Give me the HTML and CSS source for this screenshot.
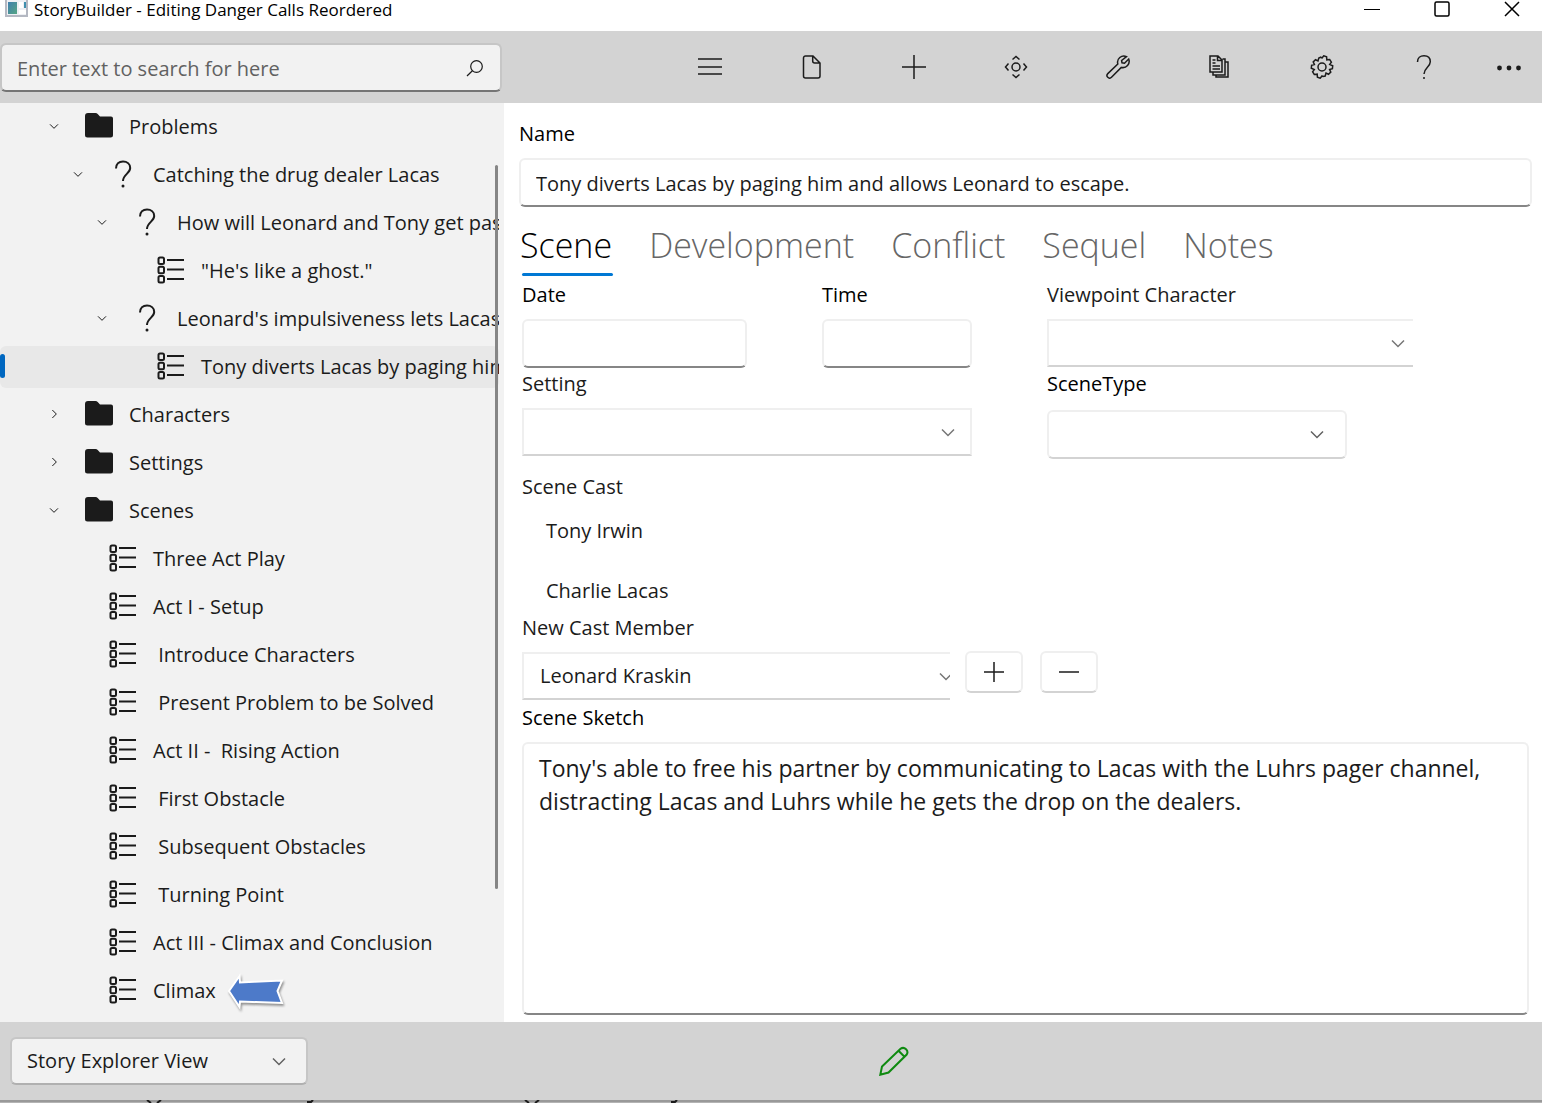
FILE: index.html
```html
<!DOCTYPE html>
<html lang="en">
<head>
<meta charset="utf-8">
<title>StoryBuilder - Editing Danger Calls Reordered</title>
<link rel="stylesheet" href="styles.css">
</head>
<body>
<svg class="sprite" aria-hidden="true">
  <symbol id="i-down" viewBox="0 0 24 24"><path d="M6 9.500l6 6 6-6"/></symbol>
  <symbol id="i-right" viewBox="0 0 24 24"><path d="M9.500 6l6 6-6 6"/></symbol>
  <symbol id="i-folder" viewBox="0 0 28 26"><path d="M0 3a3 3 0 0 1 3-3h7.500a3 3 0 0 1 2.200 1l2.300 2.500H26a2 2 0 0 1 2 2V22a2.500 2.500 0 0 1-2.500 2.500h-23A2.500 2.500 0 0 1 0 22z"/></symbol>
  <symbol id="i-question" viewBox="0 0 28 28"><path d="M7 8.500c0-4.500 3-7 7-7s7.200 2.500 7.200 6.500c0 5.500-7.200 6.500-7.200 13"/><circle cx="14" cy="26" r="1.500" fill="#1b1b1b" stroke="none"/></symbol>
  <symbol id="i-list" viewBox="0 0 28 28"><rect x="1.500" y="1.500" width="5.500" height="6.500" rx="1.500"/><rect x="1.500" y="10.800" width="5.500" height="6.500" rx="1.500"/><rect x="1.500" y="20" width="5.500" height="6.500" rx="1.500"/><path d="M10 4h17M10 13.500h17M10 23h17"/></symbol>
</svg>

<header class="titlebar">
  <svg class="app-icon" viewBox="0 0 24 18"><defs><linearGradient id="g" x1="0" y1="0" x2="1" y2="1"><stop offset="0" stop-color="#3f7fae"/><stop offset="1" stop-color="#55a584"/></linearGradient></defs><rect x="1" y="-4" width="21" height="20" fill="#eef0f4" stroke="#b4b8c2" stroke-width="2"/><rect x="3" y="2" width="9" height="12" fill="url(#g)"/><rect x="14" y="2" width="4" height="6" fill="#fff"/><rect x="19" y="2" width="2" height="6" fill="#3f8fae"/><rect x="14" y="10" width="7" height="4" fill="#fff"/></svg>
  <h1>StoryBuilder - Editing Danger Calls Reordered</h1>
  <div class="window-controls">
    <button aria-label="Minimize"><svg viewBox="0 0 16 16"><path d="M0 8.500h16" stroke-width="1"/></svg></button>
    <button aria-label="Maximize"><svg viewBox="0 0 16 16"><rect x="1" y="1" width="14" height="14" rx="1.500"/></svg></button>
    <button aria-label="Close"><svg viewBox="0 0 16 16"><path d="M1 1l14 14M15 1L1 15"/></svg></button>
  </div>
</header>

<div class="toolbar">
  <form class="search" role="search">
    <input type="text" aria-label="Search" placeholder="Enter text to search for here">
    <button type="button" aria-label="Search"><svg viewBox="0 0 18 18"><circle cx="10.500" cy="7.500" r="5.800"/><path d="M6.400 11.700L1 17"/></svg></button>
  </form>
  <nav class="commands" aria-label="Commands">
    <button aria-label="Menu"><svg viewBox="0 0 24 24"><path d="M0 4h24M0 12h24M0 19h24"/></svg></button>
    <button aria-label="File"><svg viewBox="0 0 24 24"><path d="M5.500 1h7.500l7 7v13a2 2 0 0 1-2 2H5.500a2 2 0 0 1-2-2V3a2 2 0 0 1 2-2zM12.700 1v5a2 2 0 0 0 2 2H20"/></svg></button>
    <button aria-label="Add"><svg viewBox="0 0 24 24"><path d="M0 12h24M12 0v24"/></svg></button>
    <button aria-label="Move"><svg viewBox="0 0 24 24"><circle cx="12" cy="12" r="4"/><path d="M8.500 4.500L12 1.500l3.500 3M8.500 19.500l3.500 3 3.500-3M4.500 8.500L1.500 12l3 3.500M19.500 8.500l3 3.500-3 3.500"/></svg></button>
    <button aria-label="Tools"><svg viewBox="0 0 24 24"><path d="M20.500 1.600A6.300 6.300 0 0 0 11.800 9L1.800 18.600a2.600 2.600 0 0 0 3.700 3.700L15.300 12.400A6.300 6.300 0 0 0 22.700 4l-4.200 4.200-2.500-.4-.4-2.300z"/></svg></button>
    <button aria-label="Reports"><svg viewBox="0 0 24 24"><path d="M2 1h8l4 4v12H2zM9.500 1v4.500H14M4.500 5h3M4.500 8h3M4.500 11h7.500M4.500 14h7.500M14.500 4H17v16H5v-3M17.500 7H20v15H8v-2"/></svg></button>
    <button aria-label="Settings"><svg viewBox="0 0 24 24"><circle cx="12" cy="12" r="4"/><path d="M12 3l1.800-2.200 2.800 1 .2 3 2.900-.3 1.700 2.600-1.700 2.300 3 1.300-.3 3-2.800.8 1.200 2.600-2.300 2.200-2.500-1.200-.8 2.900-2.200.4L12 21l-1.800 2.200-2.800-1-.2-3-2.900.3-1.700-2.600 1.700-2.300-3-1.300.3-3 2.800-.8L3.200 6.900l2.300-2.200L8 5.900 8.800 3l2-.8z"/></svg></button>
    <button aria-label="Help"><svg viewBox="0 0 24 24"><path d="M5.500 7c0-4 2.800-6.200 6.500-6.200S18.300 3 18.300 6.800c0 5-6.300 6-6.300 12.200"/><circle class="solid" cx="12" cy="23" r="1"/></svg></button>
    <button class="more" aria-label="More"><svg viewBox="0 0 24 24"><g class="solid"><circle cx="2.500" cy="13" r="2.400"/><circle cx="12" cy="13" r="2.400"/><circle cx="21.500" cy="13" r="2.400"/></g></svg></button>
  </nav>
</div>

<main>
  <aside class="explorer">
    <ul class="tree">
      <li class="l1"><svg class="chev"><use href="#i-down"/></svg><svg class="icon solid"><use href="#i-folder"/></svg><span>Problems</span></li>
      <li class="l2"><svg class="chev"><use href="#i-down"/></svg><svg class="icon"><use href="#i-question"/></svg><span>Catching the drug dealer Lacas</span></li>
      <li class="l3"><svg class="chev"><use href="#i-down"/></svg><svg class="icon"><use href="#i-question"/></svg><span>How will Leonard and Tony get past</span></li>
      <li class="l4"><svg class="chev"></svg><svg class="icon"><use href="#i-list"/></svg><span>"He's like a ghost."</span></li>
      <li class="l3"><svg class="chev"><use href="#i-down"/></svg><svg class="icon"><use href="#i-question"/></svg><span>Leonard's impulsiveness lets Lacas</span></li>
      <li class="l4 selected"><svg class="chev"></svg><svg class="icon"><use href="#i-list"/></svg><span>Tony diverts Lacas by paging him</span></li>
      <li class="l1"><svg class="chev"><use href="#i-right"/></svg><svg class="icon solid"><use href="#i-folder"/></svg><span>Characters</span></li>
      <li class="l1"><svg class="chev"><use href="#i-right"/></svg><svg class="icon solid"><use href="#i-folder"/></svg><span>Settings</span></li>
      <li class="l1"><svg class="chev"><use href="#i-down"/></svg><svg class="icon solid"><use href="#i-folder"/></svg><span>Scenes</span></li>
      <li class="l2"><svg class="chev"></svg><svg class="icon"><use href="#i-list"/></svg><span>Three Act Play</span></li>
      <li class="l2"><svg class="chev"></svg><svg class="icon"><use href="#i-list"/></svg><span>Act I - Setup</span></li>
      <li class="l2"><svg class="chev"></svg><svg class="icon"><use href="#i-list"/></svg><span> Introduce Characters</span></li>
      <li class="l2"><svg class="chev"></svg><svg class="icon"><use href="#i-list"/></svg><span> Present Problem to be Solved</span></li>
      <li class="l2"><svg class="chev"></svg><svg class="icon"><use href="#i-list"/></svg><span>Act II -  Rising Action</span></li>
      <li class="l2"><svg class="chev"></svg><svg class="icon"><use href="#i-list"/></svg><span> First Obstacle</span></li>
      <li class="l2"><svg class="chev"></svg><svg class="icon"><use href="#i-list"/></svg><span> Subsequent Obstacles</span></li>
      <li class="l2"><svg class="chev"></svg><svg class="icon"><use href="#i-list"/></svg><span> Turning Point</span></li>
      <li class="l2"><svg class="chev"></svg><svg class="icon"><use href="#i-list"/></svg><span>Act III - Climax and Conclusion</span></li>
      <li class="l2"><svg class="chev"></svg><svg class="icon"><use href="#i-list"/></svg><span>Climax</span>
        <svg class="pointer" viewBox="0 0 60 40"><path d="M4 18L14.500 3l.5 6.500L57 7.500 52.500 18 57 30l-42-1.500-.5 5.500z"/></svg></li>
    </ul>
    <div class="scroll-thumb"></div>
  </aside>

  <form class="editor">
    <label for="name">Name</label>
    <input id="name" type="text" value="Tony diverts Lacas by paging him and allows Leonard to escape.">
    <div class="tabs" role="tablist">
      <button type="button" role="tab" aria-selected="true">Scene</button>
      <button type="button" role="tab">Development</button>
      <button type="button" role="tab">Conflict</button>
      <button type="button" role="tab">Sequel</button>
      <button type="button" role="tab">Notes</button>
    </div>
    <div class="panel">
      <div class="fields">
        <div class="column">
          <div class="when">
            <div class="field"><label for="date">Date</label><input id="date" type="text"></div>
            <div class="field"><label for="time">Time</label><input id="time" type="text"></div>
          </div>
          <label class="soft" for="setting">Setting</label>
          <div class="combo square"><select id="setting"><option></option></select><svg><use href="#i-down"/></svg></div>
        </div>
        <div class="column">
          <label class="soft" for="viewpoint">Viewpoint Character</label>
          <div class="combo square clipped viewpoint"><select id="viewpoint"><option></option></select><svg><use href="#i-down"/></svg></div>
          <label for="scenetype">SceneType</label>
          <div class="combo scenetype"><select id="scenetype"><option></option></select><svg><use href="#i-down"/></svg></div>
        </div>
      </div>
      <h2>Scene Cast</h2>
      <ul class="cast"><li>Tony Irwin</li><li>Charlie Lacas</li></ul>
      <label class="soft" for="member">New Cast Member</label>
      <div class="member-row">
        <div class="combo square clipped member"><select id="member"><option>Leonard Kraskin</option></select><svg><use href="#i-down"/></svg></div>
        <button type="button" aria-label="Add cast member"><svg viewBox="0 0 22 22"><path d="M1 11h20M11 1v20"/></svg></button>
        <button type="button" aria-label="Remove cast member"><svg viewBox="0 0 22 22"><path d="M1 11h20"/></svg></button>
      </div>
      <label for="sketch">Scene Sketch</label>
      <textarea id="sketch">Tony's able to free his partner by communicating to Lacas with the Luhrs pager channel, distracting Lacas and Luhrs while he gets the drop on the dealers.</textarea>
    </div>
  </form>
</main>

<footer>
  <div class="combo view"><select aria-label="View"><option>Story Explorer View</option></select><svg><use href="#i-down"/></svg></div>
  <svg class="pencil" viewBox="0 0 30 30"><path d="M1.300 28.700L3 20.500 21.500 2.800a4.300 4.300 0 0 1 6 6L9.500 26.500zM19.500 4.700l6 6"/></svg>
</footer>
<div class="window-edge">
  <svg viewBox="0 0 700 3"><path d="M147 0l4 3M161 0l-4 3M307 2h4l2-2M525 0l4 3M539 0l-4 3M671 2h4l2-2"/></svg>
</div>
</body>
</html>
```

FILE: styles.css
```css
* { box-sizing: border-box; }

body {
  margin: 0;
  min-height: 100vh;
  display: flex;
  flex-direction: column;
  font: 20px/32px "Open Sans", "Noto Sans", sans-serif;
  color: #000;
  background: #fff;
}

button, input, select, textarea { font: inherit; color: #1b1b1b; margin: 0; }
button { padding: 0; border: 0; background: none; display: flex; align-items: center; justify-content: center; }
ul { list-style: none; margin: 0; padding: 0; }
h1, h2 { margin: 0; font-size: inherit; font-weight: 400; }
svg { fill: none; stroke: #1b1b1b; stroke-width: 1.5; flex: none; }
.sprite { position: absolute; width: 0; height: 0; }
.solid { fill: #1b1b1b; stroke: none; }

.titlebar { height: 31px; display: flex; align-items: flex-start; padding: 0 22px 0 5px; }
.app-icon { width: 24px; height: 18px; stroke: none; }
.titlebar h1 { font-size: 17px; line-height: 20px; margin-left: 5px; }
.window-controls { display: flex; gap: 54px; margin-left: auto; }
.window-controls button { height: 17px; }
.window-controls svg { width: 16px; height: 16px; stroke: #000; }

.toolbar { height: 72px; background: #d3d3d3; display: flex; align-items: center; }
.search {
  width: 502px;
  height: 49px;
  display: flex;
  background: #f2f2f2;
  border: 2px solid #c6c6c6;
  border-bottom-color: #757575;
  border-radius: 6px;
  background-clip: padding-box;
}
.search input { flex: 1; min-width: 0; border: 0; background: none; padding: 3px 15px 0; }
.search input::placeholder { color: #616161; opacity: 1; }
.search button { width: 50px; padding-top: 2px; }
.search svg { width: 18px; height: 18px; stroke-width: 1.2; }
.commands { display: flex; margin-left: auto; align-self: stretch; }
.commands button { width: 102px; }
.commands .more { width: 67px; }
.commands svg { width: 24px; height: 24px; }

main { flex: 1; display: flex; }
.explorer { width: 504px; background: #f2f2f2; position: relative; padding-bottom: 4px; }
.tree { width: 499px; overflow: hidden; color: #1b1b1b; }
.tree li { position: relative; height: 42px; margin: 3px 0 6px; display: flex; align-items: center; white-space: pre; border-radius: 6px; }
.tree .l1 { padding-left: 42px; }
.tree .l2 { padding-left: 66px; }
.tree .l3 { padding-left: 90px; }
.tree .l4 { padding-left: 114px; }
.tree .selected { background: #e8e8e8; }
.selected::before { content: ""; position: absolute; left: 0; top: 8px; width: 5px; height: 24px; border-radius: 3px; background: #0067c0; }
.chev { width: 24px; height: 24px; margin: 0 19px 2px 0; padding: 4px; }
.icon { width: 28px; height: 28px; margin: 0 16px 2px 0; stroke-width: 2; }
.tree .solid { stroke: none; }
.pointer { position: absolute; left: 225px; top: 3px; width: 60px; height: 40px; fill: #4d7ac9; stroke: #fff; stroke-width: 2; filter: drop-shadow(1px 2px 1px #0006); }
.scroll-thumb { position: absolute; left: 495px; top: 62px; width: 3px; height: 724px; border-radius: 2px; background: #868686; }

.editor { flex: 1; min-width: 0; display: flex; flex-direction: column; padding: 15px 10px 7px 15px; }
label, h2 { display: block; margin-bottom: 8px; }
.soft, h2, .cast { color: #1b1b1b; }
.editor input, textarea {
  display: block;
  width: 100%;
  height: 49px;
  padding: 2px 15px 0;
  border: 2px solid #efefef;
  border-bottom-color: #868686;
  border-radius: 6px;
  background: #fff;
}
.tabs { display: flex; gap: 37px; height: 69px; padding-left: 1px; }
.tabs button { font-size: 34px; font-weight: 300; line-height: 62px; padding-top: 7px; color: #666; position: relative; align-items: flex-start; }
.tabs [aria-selected] { color: #000; }
.tabs [aria-selected]::after { content: ""; position: absolute; left: 2px; right: -1px; bottom: 0; height: 3px; border-radius: 2px; background: #0078d4; }
.panel { flex: 1; display: flex; flex-direction: column; padding: 3px 3px 0; }
.fields { display: grid; grid-template-columns: 450px 1fr; column-gap: 75px; margin-bottom: 12px; }
.when { display: grid; grid-template-columns: 3fr 2fr; column-gap: 75px; }

.combo { position: relative; height: 48px; }
.combo select {
  display: block;
  width: 100%;
  height: 100%;
  padding: 0 16px;
  appearance: none;
  border: 2px solid #efefef;
  border-bottom-color: #d3d3d3;
  border-radius: 6px;
  background: #fff;
}
.combo.square select { border-radius: 0; }
.combo.clipped select { border-right: 0; }
.combo svg { position: absolute; right: 12px; top: 12px; width: 24px; height: 24px; pointer-events: none; stroke: #616161; }
.combo.square svg { stroke: #767676; }
.viewpoint { width: 366px; margin-bottom: 1px; }
.combo.viewpoint svg { right: 3px; }
.scenetype { width: 300px; height: 49px; margin-top: 10px; }
.combo.scenetype svg { right: 18px; }
.cast { padding: 4px 24px 5px; display: grid; row-gap: 28px; }
.member-row { display: flex; gap: 15px; margin-bottom: 2px; }
.member { width: 428px; overflow: hidden; }
.combo.member svg { right: -8px; }
.member-row button { width: 58px; height: 42px; margin-top: -1px; border: 2px solid #efefef; border-bottom-color: #d3d3d3; border-radius: 6px; }
.member-row button + button { margin-left: 2px; }
.member-row button svg { width: 22px; height: 22px; }
textarea { flex: 1; resize: none; padding: 8px 15px; font-size: 23px; line-height: 33px; }
.editor textarea { padding: 8px 15px; }

footer { height: 78px; background: #d3d3d3; display: flex; align-items: center; justify-content: space-between; padding: 0 633px 0 10px; }
.view { width: 298px; }
.view select { padding: 0 15px; background: #f2f2f2; border-color: #c6c6c6; border-bottom-color: #b0b0b0; background-clip: padding-box; }
.combo.view svg { right: 17px; }
.pencil { width: 30px; height: 30px; stroke: #0f8a10; stroke-width: 2; }

.window-edge { height: 3px; background: linear-gradient(#999 2px, #b4b4b4 2px); }
.window-edge svg { display: block; width: 700px; height: 3px; stroke-width: 2; }
```
